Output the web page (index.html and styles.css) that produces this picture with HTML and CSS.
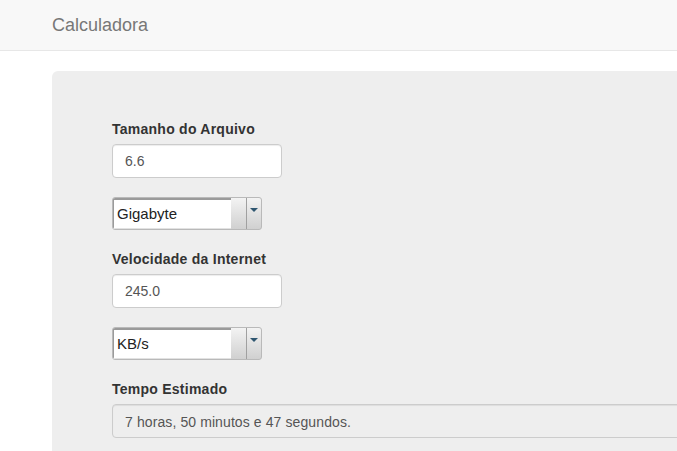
FILE: index.html
```html
<!DOCTYPE html>
<html lang="pt">
<head>
<meta charset="utf-8">
<title>Calculadora</title>
<link rel="stylesheet" href="styles.css">
</head>
<body>
<nav class="navbar">
  <span class="brand">Calculadora</span>
</nav>
<main class="jumbotron">
  <div class="group">
    <label class="label">Tamanho do Arquivo</label>
    <div class="input">6.6</div>
  </div>
  <div class="select">
    <div class="select-value">Gigabyte</div>
    <div class="select-btn"></div>
    <div class="select-arrow"><span class="tri"></span></div>
  </div>
  <div class="group">
    <label class="label">Velocidade da Internet</label>
    <div class="input">245.0</div>
  </div>
  <div class="select">
    <div class="select-value">KB/s</div>
    <div class="select-btn"></div>
    <div class="select-arrow"><span class="tri"></span></div>
  </div>
  <div class="group">
    <label class="label">Tempo Estimado</label>
    <div class="output">7 horas, 50 minutos e 47 segundos.</div>
  </div>
</main>
</body>
</html>
```
FILE: styles.css
```css
html, body {
  margin: 0;
  padding: 0;
  overflow: hidden;
  background: #fff;
  font-family: "Liberation Sans", Arial, sans-serif;
  font-size: 14px;
  color: #333;
}
.navbar {
  height: 50px;
  background: #f8f8f8;
  border-bottom: 1px solid #e7e7e7;
  display: flex;
  align-items: center;
  padding-left: 52px;
  margin-bottom: 20px;
}
.brand {
  font-size: 18px;
  line-height: 20px;
  color: #777;
}
.jumbotron {
  margin-left: 52px;
  width: 720px;
  background: #eee;
  border-radius: 6px;
  padding: 48px 60px 40px;
}
.group {
  display: flex;
  flex-direction: column;
  align-items: flex-start;
  margin-bottom: 19px;
}
.label {
  font-weight: bold;
  line-height: 20px;
  margin-bottom: 5px;
  letter-spacing: 0.25px;
}
.input {
  box-sizing: border-box;
  width: 170px;
  height: 34px;
  padding: 6px 12px;
  line-height: 20px;
  background: #fff;
  border: 1px solid #ccc;
  border-radius: 4px;
  box-shadow: inset 0 1px 1px rgba(0,0,0,.075);
  color: #555;
}
.output {
  box-sizing: border-box;
  width: 100%;
  height: 34px;
  padding: 7px 12px 5px;
  line-height: 20px;
  background: #eee;
  border: 1px solid #ccc;
  border-radius: 4px;
  box-shadow: inset 0 1px 1px rgba(0,0,0,.075);
  color: #555;
  letter-spacing: 0.1px;
}
.select {
  box-sizing: border-box;
  display: flex;
  width: 150px;
  height: 33px;
  border: 1px solid #b9b9b9;
  border-radius: 3px;
  background: linear-gradient(#f3f3f3, #d0d0d0);
  margin-bottom: 19px;
  overflow: hidden;
}
.select-value {
  box-sizing: border-box;
  width: 118px;
  background: #fff;
  border-top: 2px solid #9a9a9a;
  border-left: 1px solid #9a9a9a;
  border-bottom: 1px solid #e2e2e2;
  padding-left: 3px;
  font-size: 15px;
  line-height: 28px;
  color: #222;
}
.select-btn {
  flex: 1;
}
.select-arrow {
  width: 15px;
  border-left: 1px solid #a0a0a0;
  display: flex;
  justify-content: center;
  padding-top: 10px;
  box-sizing: border-box;
}
.tri {
  width: 0;
  height: 0;
  border-left: 4px solid transparent;
  border-right: 4px solid transparent;
  border-top: 4px solid #2e5670;
}
```
